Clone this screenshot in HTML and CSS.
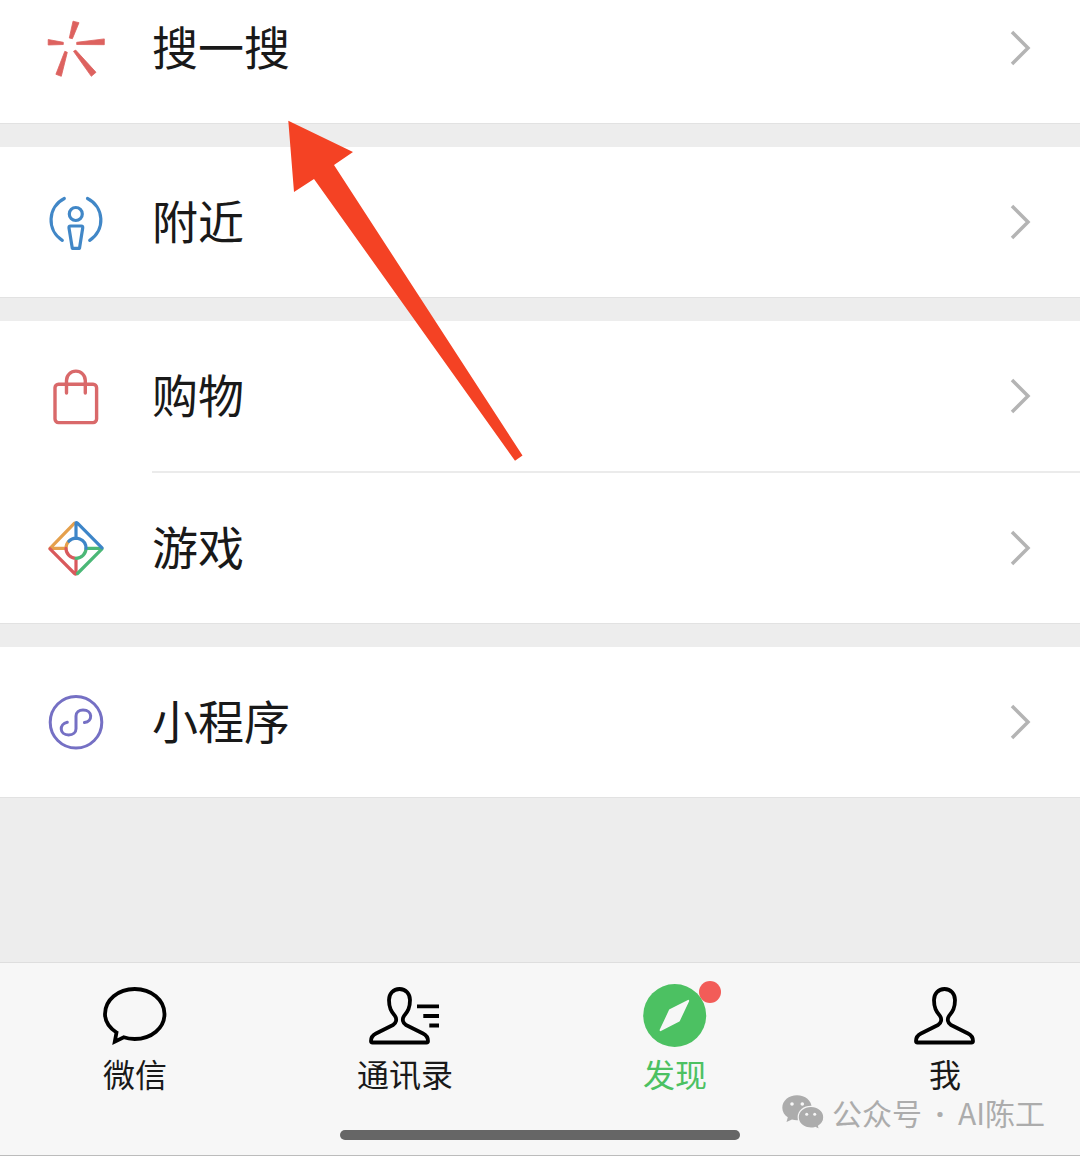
FILE: index.html
```html
<!DOCTYPE html>
<html lang="zh-CN">
<head>
    <meta charset="UTF-8">
    <meta name="viewport" content="width=device-width, initial-scale=1.0">
    <title>发现</title>
    <link rel="stylesheet" href="styles.css">
</head>
<body>
    <!-- Общие фигуры -->
    <svg class="defs" aria-hidden="true">
        <symbol id="chevron" viewBox="0 0 22 36">
            <path d="M2 2 L18 18 L2 34" fill="none" stroke="#b4b4b4" stroke-width="3.5"/>
        </symbol>
        <symbol id="person" viewBox="0 0 64 64">
            <path d="M31.5 5C25 5 21 10 21 16C21 25 24 28 27 32C29 35 28.5 39 25 41L8 49.5C4 51.5 3 54 3 57Q3 58.5 4.5 58.5H58.5Q60 58.5 60 57C60 54 59 51.5 55 49.5L38 41C34.5 39 34 35 36 32C39 28 42 25 42 16C42 10 38 5 31.5 5Z" fill="none" stroke="#000" stroke-width="3.8" stroke-linejoin="round"/>
        </symbol>
    </svg>

    <main class="list">
        <section class="group">
            <a class="row row-cut" href="#">
                <svg class="row-icon" viewBox="0 0 56 56" fill="#dd625f" stroke="#dd625f" stroke-width="0.8">
                    <path d="M25 1.2L31 2.7L24.4 18.7L21.3 18Z"/>
                    <path d="M0.2 19.5V25L15.3 24.5V22.3Z"/>
                    <path d="M56.3 18.9V24.7L28.7 24.5V22.3Z"/>
                    <path d="M16.8 31.3L19.3 32.3L13.3 56.3L7.9 54.3Z"/>
                    <path d="M25.5 31.3L27.7 30.1L48 52.3L43.3 56.3Z"/>
                </svg>
                <span class="row-title">搜一搜</span>
                <svg class="chevron"><use href="#chevron"/></svg>
            </a>
        </section>

        <section class="group">
            <a class="row" href="#">
                <svg class="row-icon" viewBox="0 0 56 56" fill="none" stroke="#4187c7" stroke-width="3.2" stroke-linecap="round" stroke-linejoin="round">
                    <path d="M16.3 4.5A24 24 0 0 0 14.3 46.3"/>
                    <path d="M39.5 4.5A24 24 0 0 1 41.7 46.3"/>
                    <circle cx="27.8" cy="20" r="6.5"/>
                    <path d="M22.5 32H33.3Q35 32 34.7 34L31.5 54.3H24.3L21 34Q20.7 32 22.5 32Z"/>
                </svg>
                <span class="row-title">附近</span>
                <svg class="chevron"><use href="#chevron"/></svg>
            </a>
        </section>

        <section class="group">
            <a class="row" href="#">
                <svg class="row-icon" viewBox="0 0 56 56" fill="none" stroke="#d9696a" stroke-width="3.4" stroke-linecap="round">
                    <rect x="7" y="16.2" width="41.6" height="38.4" rx="3.5"/>
                    <path d="M18.5 25V12.5A9.4 9.4 0 0 1 37.3 12.5V25"/>
                </svg>
                <span class="row-title">购物</span>
                <svg class="chevron"><use href="#chevron"/></svg>
            </a>
            <hr class="divider">
            <a class="row" href="#">
                <svg class="row-icon" viewBox="0 0 56 56" fill="none" stroke-width="3.2" stroke-linecap="round">
                    <path d="M2 28.3L26.5 3.2M2 28.3H18M18 28.3A10 10 0 0 1 20.9 21.2" stroke="#e5a04c"/>
                    <path d="M2 28.8L26.5 53.5Q28 54.8 28 53.5V38.5M28 38.3A10 10 0 0 1 18 28.3" stroke="#d9595c"/>
                    <path d="M54 28.8L29.5 53.5M54 28.3H38M38 28.3A10 10 0 0 1 28 38.3" stroke="#4bb877"/>
                    <path d="M54 27.8L29.5 3.2Q28 1.8 28 3.2V18.3M20.9 21.2A10 10 0 0 1 38 28.3" stroke="#3d85c8"/>
                </svg>
                <span class="row-title">游戏</span>
                <svg class="chevron"><use href="#chevron"/></svg>
            </a>
        </section>

        <section class="group">
            <a class="row" href="#">
                <svg class="row-icon" viewBox="0 0 56 56" fill="none" stroke="#7570c4" stroke-width="3" stroke-linecap="round">
                    <circle cx="28" cy="28.2" r="25.8"/>
                    <path d="M19.3 28.3C11 30 11 40.9 20.7 40.9C25 40.9 28 38.3 28 34.7V22C28 18.5 31 16 35 16C45 16 45 27.5 36.4 28.6"/>
                </svg>
                <span class="row-title">小程序</span>
                <svg class="chevron"><use href="#chevron"/></svg>
            </a>
        </section>
    </main>

    <footer class="footer">
        <nav class="tabs">
            <a class="tab" href="#">
                <span class="tab-icon">
                    <svg width="64" height="64" viewBox="0 0 64 64" fill="none" stroke="#000" stroke-width="3.8">
                        <path d="M13.5 48.5C6 43.5 2 37 2 30C2 16 15 5 31.7 5S61.5 16 61.5 30S48.5 55 31.7 55C28 55 24 54.5 20.7 53.3L11.8 57.6Z"/>
                    </svg>
                </span>
                <span class="tab-label">微信</span>
            </a>
            <a class="tab" href="#">
                <span class="tab-icon">
                    <svg width="72" height="64" viewBox="0 0 72 64">
                        <use href="#person" x="-1" width="64" height="64"/>
                        <path d="M48 22.3H70M54.3 32H70M60.3 41.5H70" stroke="#000" stroke-width="3.8"/>
                    </svg>
                </span>
                <span class="tab-label">通讯录</span>
            </a>
            <a class="tab tab-active" href="#">
                <span class="tab-icon">
                    <svg width="64" height="64" viewBox="0 0 64 64">
                        <circle cx="31.7" cy="31.5" r="31.5" fill="#4cc162"/>
                        <path d="M45.3 16.8L36 36.6L17.5 46.2L27 26Z" fill="#f7f7f7" stroke="#f7f7f7" stroke-width="1.8" stroke-linejoin="round"/>
                    </svg>
                    <span class="badge"></span>
                </span>
                <span class="tab-label">发现</span>
            </a>
            <a class="tab" href="#">
                <span class="tab-icon">
                    <svg width="64" height="64"><use href="#person"/></svg>
                </span>
                <span class="tab-label">我</span>
            </a>
        </nav>
        <div class="home-bar"></div>

        <!-- Подпись поверх панели -->
        <div class="watermark">
            <svg width="44" height="36" viewBox="0 0 44 36">
                <path d="M16 0.3C7.8 0.3 1.3 5.8 1.3 12.7C1.3 16.6 3.4 20 6.8 22.3L5.5 27L11 24.5C12.6 25 14.3 25.2 16 25.2C24.2 25.2 30.7 19.6 30.7 12.7S24.2 0.3 16 0.3Z" fill="#acacac"/>
                <path d="M30 11.4C22.8 11.4 17.2 16.2 17.2 22.3S22.8 33.1 30 33.1C31.5 33.1 33 32.9 34.3 32.5L38.5 34.5L37.6 31C40.8 29 42.8 25.9 42.8 22.3C42.8 16.2 37.2 11.4 30 11.4Z" fill="#acacac" stroke="#f7f7f7" stroke-width="1.2"/>
                <g fill="#f7f7f7">
                    <circle cx="11" cy="9" r="1.8"/>
                    <circle cx="21.3" cy="9" r="1.8"/>
                    <circle cx="25.7" cy="19.2" r="1.5"/>
                    <circle cx="33.7" cy="19.2" r="1.5"/>
                </g>
            </svg>
            <span class="watermark-text">公众号 <span class="dot">·</span> AI陈工</span>
        </div>
    </footer>

    <!-- Стрелка-указатель -->
    <svg class="arrow" width="236" height="342" viewBox="0 0 236 342">
        <path d="M0.3 0.7L65 32L46 45L234.5 335.5L227 340.7L26 59L6 72Z" fill="#f44224"/>
    </svg>
</body>
</html>
```
FILE: styles.css
```css
* {
    box-sizing: border-box;
}
body {
    margin: 0;
    min-height: 100vh;
    display: flex;
    flex-direction: column;
    position: relative;
    background-color: #ededed;
    color: #191919;
    font-family: "Noto Sans CJK SC", sans-serif;
}
a {
    color: inherit;
    text-decoration: none;
}
svg {
    display: block;
}
.defs {
    position: absolute;
    width: 0;
    height: 0;
}

/* Список */
.list {
    flex: 1;
    display: flex;
    flex-direction: column;
    gap: 24px;
}
.group {
    background-color: #fff;
    box-shadow: 0 1px 0 #e2e2e2;
}
.row {
    display: flex;
    align-items: center;
    gap: 48px;
    padding: 47px 48px;
}
/* Первая строка прокручена под верхний край */
.row-cut {
    padding-top: 20px;
}
.row-icon {
    width: 56px;
    height: 56px;
    overflow: visible;
}
.row-title {
    flex: 1;
    padding-bottom: 6px;
    font-size: 46px;
    line-height: 50px;
}
.chevron {
    width: 22px;
    height: 36px;
}
.divider {
    height: 2px;
    margin: 0 0 0 152px;
    border: none;
    background-color: #ebebeb;
}

/* Нижняя панель */
.footer {
    position: relative;
    padding: 21px 0 15px;
    background-color: #f7f7f7;
    border-top: 1px solid #dedede;
    border-bottom: 1px solid #bcbcbc;
}
.tabs {
    display: grid;
    grid-template-columns: repeat(4, 1fr);
}
.tab {
    display: flex;
    flex-direction: column;
    align-items: center;
    gap: 8px;
}
.tab-icon {
    position: relative;
}
.tab-label {
    font-size: 32px;
    line-height: 34px;
}
.tab-active {
    color: #4cc162;
}
.badge {
    position: absolute;
    top: -3px;
    right: -14px;
    width: 22px;
    height: 22px;
    border-radius: 50%;
    background-color: #f25c58;
}
.home-bar {
    width: 400px;
    max-width: 60%;
    height: 10px;
    margin: 40px auto 0;
    border-radius: 5px;
    background-color: #666;
}
.watermark {
    position: absolute;
    right: 35px;
    bottom: 24px;
    display: flex;
    align-items: center;
    gap: 7px;
    color: #acacac;
    font-size: 30px;
}
.watermark-text {
    line-height: 32px;
}
.dot {
    margin: 0 7px;
    font-family: "Noto Sans", sans-serif;
    font-weight: bold;
}

.arrow {
    position: absolute;
    left: 288px;
    top: 120px;
}
```
